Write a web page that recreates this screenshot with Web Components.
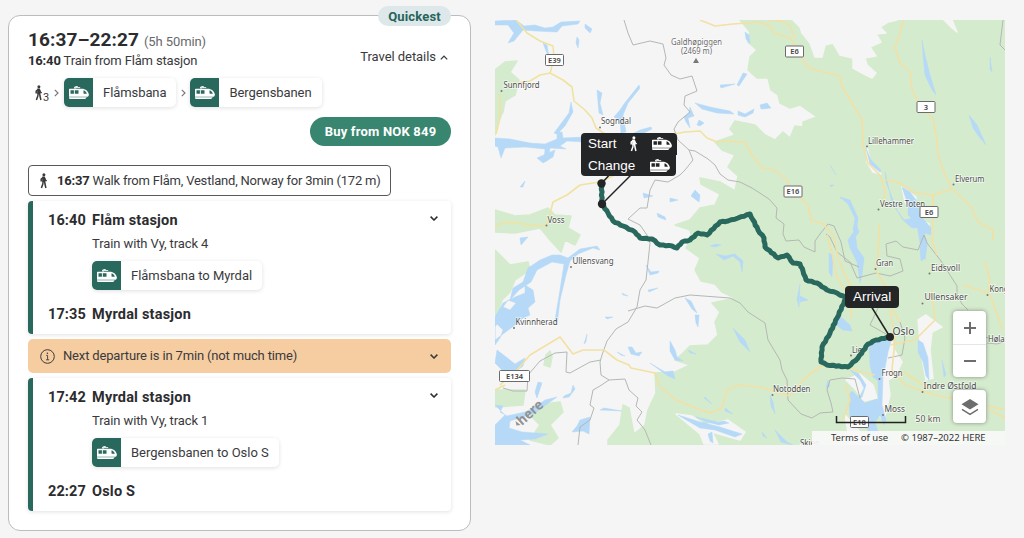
<!DOCTYPE html>
<html lang="en">
<head>
<meta charset="utf-8">
<title>Travel details</title>
<style>
  body {
    margin: 0;
    height: 538px;
    overflow: hidden;
    background: #f5f5f6;
    color: #3a3a3d;
    font: 13px/18px Roboto, "Liberation Sans", sans-serif;
    letter-spacing: -.16px;
  }
</style>
</head>
<body>
<travel-page>
  <trip-card slot="trip" badge="Quickest"></trip-card>
  <route-map slot="map"></route-map>
</travel-page>

<script>
  const ICONS = {
    train: `<svg viewBox="0 0 20 14" width="20" height="14">
      <path d="M6.3 3 5.4 1.2 8.2 .2M8.2 0v1.6M5.6 1.6h5.6" fill="none" stroke="currentColor" stroke-width=".9"/>
      <path fill="currentColor" fill-rule="evenodd" d="M.6 2.7H14c3 .5 5.2 2.7 5.8 5.3.3 1.7-.5 2.7-2 2.7H0V3.3ZM1.5 4.3v3.5h3.4V4.3Zm4.3 0v3.5h3.7V4.3Zm8.7 0v2.6c0 .6.3.9.9.9h2.5c-.7-1.7-1.7-3-3.4-3.5Z"/>
      <path fill="currentColor" d="M0 11.3h17.8l-1.6 1.7H1.2Q0 13 0 12Z"/>
    </svg>`,
    walk: `<svg viewBox="0 0 9 16" width="9" height="16">
      <circle cx="4.9" cy="1.7" r="1.5" fill="currentColor"/>
      <path fill="currentColor" d="M3.4 3.6h2.5l.5 5.2H3.1Z"/>
      <path d="M4.4 4.4 2.2 6.2v2.2M5.3 4.4 6.4 7l1.2 1M4.2 8 3.8 11 2.4 15M5.5 8l.5 3 .9 4" fill="none" stroke="currentColor" stroke-width="1.5"/>
    </svg>`,
    right: `<svg viewBox="0 0 5 8" width="5" height="8"><path d="m.8.8 3.2 3.2L.8 7.2" fill="none" stroke="#77777b" stroke-width="1.2"/></svg>`,
    up: `<svg viewBox="0 0 8 5" width="8" height="5"><path d="M.8 4.4 4 1.1l3.2 3.3" fill="none" stroke="currentColor" stroke-width="1.3"/></svg>`,
    down: `<svg viewBox="0 0 8 5" width="8" height="5"><path d="M.6.6 4 4 7.4.6" fill="none" stroke="currentColor" stroke-width="1.5"/></svg>`,
    info: `<svg viewBox="0 0 15 15" width="15" height="15"><circle cx="7.5" cy="7.5" r="6.8" fill="none" stroke="currentColor"/><path d="M6.2 6.4h1.4v4.3M6 10.8h3.2" fill="none" stroke="currentColor" stroke-width=".9"/><circle cx="7.4" cy="4.2" r=".8" fill="currentColor"/></svg>`,
    layers: `<svg viewBox="0 0 18 18" width="18" height="18"><path d="m9 1 8.5 5.2L9 11.5.5 6.2Z" fill="#6c6d6f"/><path d="m1 11.3 8 5 8-5" fill="none" stroke="#6c6d6f" stroke-width="1.5"/></svg>`
  };

  class UiIcon extends HTMLElement {
    connectedCallback() {
      this.attachShadow({ mode: 'open' }).innerHTML = `
        <style>
          :host { display: inline-flex; flex: none; }
          svg { display: block; }
        </style>
        ${ICONS[this.getAttribute('name')]}`;
    }
  }
  customElements.define('ui-icon', UiIcon);

  class TravelPage extends HTMLElement {
    constructor() {
      super();
      this.attachShadow({ mode: 'open' }).innerHTML = `
        <style>
          :host { display: flex; gap: 24px; align-items: flex-start; box-sizing: border-box; padding: 15px 19px 0 8px; }
          ::slotted([slot=map]) { margin-top: 5px; }
        </style>
        <slot name="trip"></slot>
        <slot name="map"></slot>`;
    }
  }
  customElements.define('travel-page', TravelPage);

  // white pill with a green train tile in front of the line name
  class LineChip extends HTMLElement {
    constructor() {
      super();
      this.attachShadow({ mode: 'open' }).innerHTML = `
        <style>
          :host {
            display: inline-flex;
            height: 29px;
            box-sizing: border-box;
            align-items: center;
            border-radius: 5px;
            background: #fff;
            box-shadow: 0 1px 4px rgba(0, 0, 0, .13);
            letter-spacing: -.08px;
            white-space: nowrap;
          }
          .tile {
            display: flex;
            width: 29px;
            height: 29px;
            align-items: center;
            justify-content: center;
            border-radius: 5px 0 0 5px;
            background: #29685d;
            color: #fff;
          }
          .name { padding: 0 10px; }
        </style>
        <span class="tile"><ui-icon name="train"></ui-icon></span>
        <span class="name"><slot></slot></span>`;
    }
  }
  customElements.define('line-chip', LineChip);

  class TripLeg extends HTMLElement {
    connectedCallback() {
      const get = name => this.getAttribute(name);
      this.attachShadow({ mode: 'open' }).innerHTML = `
        <style>
          :host {
            display: block;
            height: 133px;
            box-sizing: border-box;
            padding: 10px 13px 0 15px;
            border-left: 5px solid #29685d;
            border-radius: 4px;
            box-shadow: 0 1px 4px rgba(0, 0, 0, .12);
          }
          .stop { display: flex; height: 19px; line-height: 19px; font-size: 14.5px; font-weight: 700; letter-spacing: .2px; color: #2c2c2f; }
          .time { width: 44px; letter-spacing: .1px; }
          .place { flex: 1; }
          .mode { margin: 5px 0 8px 44px; letter-spacing: -.1px; }
          line-chip { margin: 0 0 15px 44px; vertical-align: top; letter-spacing: -.02px; }
          ui-icon { margin-top: 5px; }
        </style>
        <div class="stop"><span class="time">${get('depart')}</span><span class="place">${get('from')}</span><ui-icon name="down"></ui-icon></div>
        <div class="mode">${get('mode')}</div>
        <line-chip>${get('line')}</line-chip>
        <div class="stop"><span class="time">${get('arrive')}</span><span class="place">${get('to')}</span></div>`;
    }
  }
  customElements.define('trip-leg', TripLeg);

  class TripCard extends HTMLElement {
    connectedCallback() {
      this.attachShadow({ mode: 'open' }).innerHTML = `
        <style>
          :host {
            display: block;
            position: relative;
            flex: none;
            width: 463px;
            height: 516px;
            box-sizing: border-box;
            padding: 14px 19px 0;
            border: 1px solid #b9bdc0;
            border-radius: 12px;
            background: #fff;
          }
          .badge {
            position: absolute;
            top: -10px;
            right: 19px;
            width: 73px;
            height: 20px;
            border-radius: 10px;
            background: #dee8ea;
            color: #27645a;
            font-weight: 700;
            line-height: 21px;
            text-align: center;
            letter-spacing: .15px;
          }
          header { display: flex; justify-content: space-between; }
          h1 { display: flex; gap: 5px; align-items: baseline; margin: 0; font-size: 19px; line-height: 19px; letter-spacing: .1px; color: #2c2c2f; }
          h1 small { font-size: 13px; font-weight: 400; letter-spacing: -.1px; color: #68686c; }
          .first { line-height: 19px; }
          .more { display: flex; gap: 4px; align-items: center; height: 18px; margin: 18px 3px 0 0; letter-spacing: -.05px; }
          .legs { display: flex; align-items: center; height: 29px; margin: 8px 0 0 6px; }
          .legs sub { align-self: flex-end; line-height: 14px; vertical-align: baseline; margin-bottom: 2px; font-size: 11px; }
          .legs .gap { margin: 0 5px; }
          .legs .gap + line-chip + .gap { margin: 0 4px 0 5px; }
          .buy { display: flex; justify-content: flex-end; margin: 10px 0 19px; }
          button {
            width: 141px;
            height: 29px;
            padding: 0;
            border: 0;
            border-radius: 15px;
            background: #38866f;
            color: #fff;
            font: 700 13px Roboto, sans-serif;
            letter-spacing: .2px;
          }
          .walk {
            display: flex;
            width: 363px;
            height: 31px;
            box-sizing: border-box;
            align-items: center;
            gap: 9px;
            padding-left: 10px;
            margin-bottom: 5px;
            border: 1px solid #59595c;
            border-radius: 4px;
            letter-spacing: -.2px;
            white-space: nowrap;
          }
          b { color: #2c2c2f; }
          .notice {
            display: flex;
            height: 34px;
            box-sizing: border-box;
            align-items: center;
            gap: 8px;
            margin: 5px 0;
            padding: 0 13px 0 12px;
            border-radius: 5px;
            background: #f6cda1;
          }
          .notice span { flex: 1; }
        </style>
        <span class="badge">${this.getAttribute('badge')}</span>
        <header>
          <div>
            <h1>16:37–22:27 <small>(5h 50min)</small></h1>
            <div class="first"><b>16:40</b> Train from Flåm stasjon</div>
          </div>
          <span class="more">Travel details <ui-icon name="up"></ui-icon></span>
        </header>
        <div class="legs">
          <ui-icon name="walk"></ui-icon><sub>3</sub>
          <ui-icon class="gap" name="right"></ui-icon>
          <line-chip>Flåmsbana</line-chip>
          <ui-icon class="gap" name="right"></ui-icon>
          <line-chip>Bergensbanen</line-chip>
        </div>
        <div class="buy"><button>Buy from NOK 849</button></div>
        <div class="walk">
          <ui-icon name="walk"></ui-icon>
          <span><b>16:37</b> Walk from Flåm, Vestland, Norway for 3min (172 m)</span>
        </div>
        <trip-leg depart="16:40" from="Flåm stasjon" mode="Train with Vy, track 4" line="Flåmsbana to Myrdal" arrive="17:35" to="Myrdal stasjon"></trip-leg>
        <div class="notice">
          <ui-icon name="info"></ui-icon>
          <span>Next departure is in 7min (not much time)</span>
          <ui-icon name="down"></ui-icon>
        </div>
        <trip-leg depart="17:42" from="Myrdal stasjon" mode="Train with Vy, track 1" line="Bergensbanen to Oslo S" arrive="22:27" to="Oslo S"></trip-leg>`;
    }
  }
  customElements.define('trip-card', TripCard);

  // black label above a stop on the map
  class MapPin extends HTMLElement {
    constructor() {
      super();
      this.attachShadow({ mode: 'open' }).innerHTML = `
        <style>
          :host {
            position: absolute;
            display: flex;
            box-sizing: border-box;
            align-items: center;
            justify-content: space-between;
            height: 22px;
            padding: 0 5px 0 7px;
            border-radius: 4px;
            background: #242526;
            color: #fff;
            font: 13.5px/22px "Liberation Sans", Arial, sans-serif;
          }
        </style>
        <slot></slot>`;
    }
  }
  customElements.define('map-pin', MapPin);

  const FOREST = [
    'M740 20 750 32 748 42 757 50 750 57 748 70 757 78 768 78 771 90 778 95 780 103 790 108 800 105 817 117 803 122 803 127 795 126 790 138 783 132 775 140 765 135 755 125 735 121 730 129 735 135 715 142 722 150 735 155 728 167 738 176 735 191 720 182 700 178 701 184 720 194 715 205 700 208 690 220 675 225 690 230 692 238 686 248 700 258 695 270 701 281 715 284 722 292 735 298 712 303 720 312 715 322 718 335 708 345 690 346 682 354 675 360 690 365 675 372 655 373 656 393 648 410 645 425 634 434 629 408 623 405 620 425 608 440 608 445 1005 445 1005 20Z',
    'M495 70 505 62 517 61 510 72 519 80 515 95 505 101 503 112 498 122 495 135Z',
    'M495 210 515 216 530 215 548 208 555 215 571 216 568 228 580 235 575 245 565 240 561 252 550 240 540 228 515 233 495 232Z',
    'M495 250 503 258 510 265 528 262 530 270 515 280 510 292 502 300 495 320Z',
    'M495 390 525 390 523 405 495 407Z',
    'M535 405 560 402 563 412 550 425 558 438 550 445 530 440 540 425 530 415Z',
    'M546 355l4-4 2 6-2 10-6-2Z'
  ];

  // bare mountain and built-up areas inside the forest
  const BARE = [
    'M793 20 800 27 802 33 810 43 815 57 822 57 825 45 833 43 840 55 853 58 853 68 862 73 872 78 876 73 867 65 865 58 876 56 870 47 881 42 876 34 886 33 880 27 888 22 897 20Z',
    'M944 20h8l5 12-5-4Z',
    'M753 83l13-2-4 9-7 1Z',
    'M676 414 692 416 705 425 728 420 745 432 740 440 712 432 718 444 704 444 700 434Z',
    'M882 340 892 337 893 348 902 362 896 375 888 380 890 395 884 420 878 415 881 380Z',
    'M846 380 860 374 873 385 877 398 864 401 856 390Z',
    'M918 320 926 315 942 327 932 332 930 350 933 378 926 380 921 352Z',
    'M845 415 860 432 872 436 870 445 850 445Z',
    'M867 147l4 17 10 10-8-2-6-10Z',
    'M902 187l14 10-3 20-8-15ZM913 217l16 7-1 8-10-3Z'
  ];

  const WATER = [
    'M495 21 516 20 524 26 535 25 545 28 553 27 561 22 580 21 578 24 562 26 557 32 536 31 523 30 514 41 508 43 514 33 508 25 495 25Z',
    'M585 24l7 5-2 4-5-5ZM577 37l2 3-1 8-2-5ZM543 43l4 2 2 12-3-6Z',
    'M495 138 510 139 530 143 545 144 557 139 557 132 562 132 563 138 585 137 585 142 567 141 560 146 566 149 550 148 548 160 544 162 545 149 525 147 505 148 501 158 498 147 495 146Z',
    'M571 102l2 10-8 14-8 8-3-1 15-20Z',
    'M597 90l5 3-2 10 3 12-4-2-1-11ZM614 117l6-7 4-6 15-19 1 3-12 15-5 12 3 17-5 1-1-12Z',
    'M640 130l11-3 1 2-8 4-12 1Z',
    'M546 154 555 150 553 157 543 163 537 158Z',
    'M695 103 710 107 730 111 734 114 717 113 702 109ZM738 111l7 3 9-5-1 4-8 4-7-2ZM760 105l7-2 4 5-10 1ZM745 32l4 3 1 9-4-5ZM743 73l4 1-8 12-2-1ZM720 85l15-1-14 4Z',
    'M690 107 694 116 688 118 690 128 686 122 684 117 689 113ZM699 120l5 3-4 3-3-1Z',
    'M922 40 925 55 930 75 936 95 932 90 925 75 923 55ZM969 115 977 125 986 145 980 138 973 128ZM990 57l2 15-2-3Z',
    'M866 148 870 164 880 172 881 170 871 160ZM902 187 910 192 916 200 920 215 931 228 931 235 921 232 915 222 908 215 908 205ZM885 172 886 182 897 210 904 220 913 218 919 228 912 228 903 220 892 203Z',
    'M840 197l10 3 8 18-2 17-3-5 2-12-7-14ZM830 185h4l-3 2Z',
    'M495 345 500 338 503 330 497 324 495 327ZM495 317 503 303 515 297 525 293 525 285 533 290 535 302 528 308 530 315 523 318 515 325 495 340ZM508 300l-5 7 7 3 6-7Z',
    'M510 300 513 288 523 282 528 268 540 260 552 255 560 255 568 258 580 249 597 246 600 250 593 248 578 254 570 261 566 275 560 300 557 325 555 320 560 290 564 264 552 262 537 270 531 282 519 290Z',
    'M497 350 515 364 525 358 523 366 515 372 505 373 495 363Z',
    'M495 405 503 406 500 412 507 416 525 412 535 407 545 400 557 397 550 402 535 413 510 421 509 428 522 432 548 434 535 439 520 440 530 445 495 445 495 425 505 415Z',
    'M538 382l4 1-5 15-2-6ZM563 398l6-1 6-8-2-4-2 8-7 3ZM580 420 590 417 589 434 583 431 572 432 577 426ZM600 410l22 1-18-3ZM587 334l-3 10 2-2ZM605 317h8l-6 2ZM628 347l4 0 4 6 6-1-3 4-8-2ZM617 352l8 4-4-1Z',
    'M670 341 675 350 677 357 683 361 675 360 670 351ZM688 350l8 4-6-1ZM650 363 665 372 673 371 675 379 668 376ZM685 298l6 3 6 12-5-4ZM695 315l4 0-1 12-2-4Z',
    'M695 190l5 5-1 7-8-6ZM643 193l10 3-9 2ZM657 213l8 4 1 3-8-3ZM670 198l8 2-8 2ZM646 265l5 7 8-1-1 2-8 2ZM622 293l6 3-5-1ZM648 290l10-2-9 4ZM520 187l5-6-2 6ZM520 238l8-1-7 8Z',
    'M710 246l6-2 5 1-6 2ZM716 254 725 256 735 254 743 261 742 272 740 262 733 256 724 260ZM733 328 745 340 750 352 740 342ZM829 253l4 2-1 22-3-5ZM840 198l8 2ZM800 284l-3 15 2 8Z',
    'M855 230 857 248 864 258 862 275 860 283 857 262 850 248 848 240ZM836 317l6 1 8 7 2 6-9-1-8-6ZM853 240l4-14 2 6Z',
    'M869 344 876 342 892 338 888 352 885 368 880 382 873 377 870 365ZM878 380 883 376 882 405 886 420 884 425 878 410ZM850 370 859 374 866 385 862 397 858 400 864 388 860 380ZM852 391 865 403 877 399 881 414 875 422 879 435 882 445 872 436 866 427 850 418 849 395Z',
    'M918 340 923 343 928 358 929 380 926 376 923 362 918 352ZM923 237 927 245 925 258 921 261 920 248ZM915 215l8 15 4 12-2 18-4-12ZM942 360l4 15-2 2Z',
    'M678 415 700 422 720 427 742 434 735 437 715 430 700 428 688 421ZM703 422l5 2-1 2ZM708 434l4-2 1 11-3-2ZM696 417l22 5 6-1 5 2-10 2-12-3Z',
    'M770 395l3 7 2 12-4-8ZM775 430l12 12 6 3-12-3ZM762 432l5 6-4-2ZM800 296l8 4-8 2ZM725 408l8 6-8-3ZM705 397l7 7-8-6Z',
    'M830 165l6 10ZM828 380l2 6-4 2Z'
  ];

  const BORDERS = [
    'M624 20 628 33 633 45 650 41 663 44 666 58 664 65 671 75 680 79 692 76 697 91 685 96 684 105 690 112 678 122 674 129 678 140 689 150 695 151 708 159 715 165 720 174 728 180 740 182 752 188 769 199 777 208 776 218 784 224 783 234 786 241 799 240 804 247 815 252 815 241 820 234 828 224 834 226 841 242 845 261 859 267',
    'M689 150 693 160 685 170 680 175 668 182 655 180 650 190 647 208 640 208 628 219 640 225 647 235 650 243 648 262 646 280 640 290 637 307 628 322 616 329 607 341 602 355 600 362 601 375 609 380 625 379 629 390 638 398 636 406 642 412 637 420 645 430 651 445',
    'M601 360 590 362 570 373 566 372 567 352 555 353 540 361 528 375 527 391 513 391 503 388',
    'M609 380 600 386 593 390 590 405 594 408 590 420 580 427 578 445',
    'M628 311 645 306 657 308 675 298 690 295 730 298 740 303 748 312 765 323 768 340 780 360 782 370 787 380 788 400 801 414 812 418 820 413 833 412 831 403 827 390 830 380 842 378 855 379 860 398',
    'M826 234 830 237 837 252 850 262 857 278 876 273 890 276 903 271 900 259 887 256 886 244 896 241 903 247 918 250 924 235 927 243 941 261 950 275 957 286 957 295 962 304 968 310M1003 20 1000 45 1005 50M878 308 870 325 888 335M900 322 905 338 902 355 888 358M970 340 985 337 1003 342 997 344 987 343'
  ];

  const ROADS = [
    ['#f0e3a0', 'M516 20 527 33 540 41 553 46 554 57 551 70 550 73 540 75 530 81 515 83M550 73 563 80 572 87 574 101 585 110 592 118 596 128 605 134'],
    ['#f0e3a0', 'M500 94 500 118 496 134M495 225 510 222 530 225 546 226 551 210 553 202 567 195 580 185 600 182 625 170 674 134 685 132 700 131 707 138 717 142 730 141'],
    ['#f3e0a4', 'M700 20 715 26 733 24 760 22 770 26 774 33 790 38 795 45 803 60 807 67 822 72 840 76 842 87 852 103 862 120 863 145 868 163 880 175 885 190 884 203M767 20 780 21 790 25 795 38M885 180 900 183 913 192 933 195 952 189 945 175 938 155 937 140 933 118 921 108 912 90 910 72 900 63 895 47 900 33 903 20M952 189 970 205 978 222 993 230 993 240M933 195 933 215 932 240 937 255M879 225 878 257 875 267M730 141 745 143 752 155 762 168 775 170 787 180 790 187 800 197 808 205 811 220 823 224 834 236 838 258 845 275 852 288M827 235 832 253 836 275 848 295 852 318M875 269 885 285 890 305 900 322M890 345 915 340 935 320 932 290M890 310 895 340 892 370 905 385 935 395 985 405 1005 410M963 285 988 293 990 280 985 262M990 295 1003 330'],
    ['#f3e0a4', 'M500 385 518 369 530 355 560 337 573 354 583 350 604 350 617 360 629 365 631 368 655 373 660 387 675 399 690 406 710 413 722 408 727 390 738 385 760 387 790 396 805 378 821 366 850 366M843 420 850 400 846 385M848 367 860 372 875 375M990 410 1005 418'],
    ['#f0e3a0', 'M495 390 505 385M904 372 930 390']
  ];

  // [text, x, baseline, width, size]
  const PLACES = [
    ['Galdhøpiggen', 671, 44.5, 51, 8.6, '#6b6b6b'],
    ['(2469 m)', 681, 54, 31, 8.6, '#6b6b6b'],
    ['Sunnfjord', 503.5, 88, 36, 8.6],
    ['Sogndal', 601, 124, 30, 8.6],
    ['Voss', 547.5, 223, 17, 8.6],
    ['Ullensvang', 572.5, 264, 41, 8.6],
    ['Kvinnherad', 515.5, 325, 42, 8.6],
    ['Lillehammer', 868, 143.5, 46, 8.6],
    ['Elverum', 955, 181.5, 29.5, 8.6],
    ['Vestre Toten', 880, 206.5, 45, 8.6],
    ['Gran', 876, 266, 17, 8.6],
    ['Eidsvoll', 931, 271, 29, 8.6],
    ['Kong', 989.5, 292, 19, 8.6],
    ['Ullensaker', 924.5, 300, 43, 8.6],
    ['Oslo', 892.5, 334.5, 22, 10.5],
    ['Høla', 988, 341.5, 16.5, 8.6],
    ['Lier', 852, 352.5, 13, 8.6],
    ['Frogn', 881.5, 376, 21, 8.6],
    ['Notodden', 773, 392, 37.5, 8.6],
    ['Indre Østfold', 923.5, 389, 53, 8.6],
    ['Moss', 884.5, 412, 20.5, 8.6],
    ['Skien', 800, 446, 20, 8.6]
  ];

  const TOWNS = [[501.5, 91], [600, 127.5], [546.5, 225.5], [571, 267], [514, 328], [867, 146.5], [953.5, 184.5], [878.5, 209.5], [875.5, 269], [929.5, 273.5], [987.5, 295], [922.5, 303.5], [851, 355.5], [879.5, 379], [772.5, 395], [922.5, 392], [883, 415]];

  const SHIELDS = [['E39', 554.5, 60, 18], ['E6', 794.5, 51.5, 18], ['3', 926, 107, 18], ['E16', 793, 191.5, 18], ['E6', 929, 212, 18], ['E134', 514.5, 376, 30], ['E18', 859.5, 422, 18]];

  const ROUTE = [[601.5, 183], [602, 204], [608, 213], [613, 221], [623, 226], [635, 232], [640, 238], [652, 239], [660, 245], [672, 246], [677, 248], [682, 242], [690, 240], [698, 233], [707, 235], [720, 222], [728, 221], [738, 218], [750, 214], [753, 220], [758, 230], [764, 238], [765, 247], [778, 258], [787, 255], [793, 263], [800, 264], [803, 271], [806, 280], [817, 283], [827, 290], [837, 293], [846, 298], [837, 318], [830, 333], [822, 347], [821, 362], [827, 365], [848, 367], [858, 358], [868, 344], [876, 340], [890, 337]];

  function trackPath(points) {
    let n = 0;
    const out = [points[0]];
    for (let i = 1; i < points.length; i++) {
      const [ax, ay] = points[i - 1];
      const [bx, by] = points[i];
      const len = Math.hypot(bx - ax, by - ay);
      const steps = Math.max(1, Math.round(len / 3));
      for (let s = 1; s <= steps; s++) {
        const bend = s === steps ? 0 : (n++ % 2 ? 0.35 : -0.35);
        const t = s / steps;
        out.push([
          (ax + (bx - ax) * t - (by - ay) / len * bend).toFixed(1),
          (ay + (by - ay) * t + (bx - ax) / len * bend).toFixed(1)
        ]);
      }
    }
    return 'M' + out.join(' ');
  }

  class RouteMap extends HTMLElement {
    connectedCallback() {
      const paths = (list, attrs) => list.map(d => `<path d="${d}" ${attrs}/>`).join('');
      this.attachShadow({ mode: 'open' }).innerHTML = `
        <style>
          :host { display: block; position: relative; width: 510px; height: 425px; overflow: hidden; background: #f5f5f5; letter-spacing: 0; }
          svg.land { display: block; font-family: "Noto Sans", "Open Sans", sans-serif; }
          .halo { paint-order: stroke; stroke: rgba(255, 255, 255, .65); stroke-width: 1.6px; }
          .start { left: 86px; top: 113px; width: 96px; border-radius: 4px 4px 0 0; }
          .change { left: 86px; top: 135px; width: 95px; height: 21px; line-height: 20px; padding-right: 6px; border-radius: 0 0 4px 4px; }
          .arrival { left: 350px; top: 266px; width: 54px; padding: 0 8px; }
          .start span { flex: 1; }
          .start ui-icon[name=walk] { margin-right: 14px; }
          .controls { position: absolute; left: 458px; top: 291px; display: flex; flex-direction: column; gap: 13px; }
          .box { display: flex; flex-direction: column; width: 33px; border-radius: 4px; background: #fff; box-shadow: 0 0 4px rgba(0, 0, 0, .4); }
          .box span { display: flex; height: 33px; align-items: center; justify-content: center; }
          .box span + span { border-top: 1px solid #e6e6e6; height: 32px; }
          .legal {
            position: absolute;
            right: 0;
            bottom: 0;
            display: flex;
            width: 193px;
            height: 14px;
            box-sizing: border-box;
            padding-left: 19px;
            gap: 13px;
            background: rgba(249, 249, 249, .9);
            color: #333;
            font: 9.5px/14px "Noto Sans", sans-serif;
            white-space: nowrap;
          }
        </style>
        <svg class="land" width="510" height="425" viewBox="495 20 510 425">
          ${paths(FOREST, 'fill="#d5ebce" stroke="#d5ebce" stroke-width="1.5" stroke-linejoin="round"')}
          ${paths(BARE, 'fill="#f5f5f5" stroke="#f5f5f5" stroke-width="1.5" stroke-linejoin="round"')}
          ${paths(WATER, 'fill="#b5d9f7" stroke="#b5d9f7" stroke-width=".5" stroke-linejoin="round"')}
          ${paths(BORDERS, 'fill="none" stroke="#b4b8b4" stroke-linejoin="round"')}
          ${ROADS.map(([color, d]) => `<path d="${d}" fill="none" stroke="${color}" stroke-width="1.6" stroke-linejoin="round"/>`).join('')}
          <path d="m696 58 3 5h-6Z" fill="#777"/>
          ${TOWNS.map(([x, y]) => `<circle cx="${x}" cy="${y}" r="1" fill="#777"/>`).join('')}
          ${PLACES.map(([text, x, y, w, size, color = '#4c4c4c']) =>
            `<text class="halo" x="${x}" y="${y}" font-size="${size}" fill="${color}" textLength="${w}" lengthAdjust="spacingAndGlyphs">${text}</text>`).join('')}
          ${SHIELDS.map(([text, x, y, w]) => `
            <rect x="${x - w / 2}" y="${y - 5.5}" width="${w}" height="11" rx="1" fill="#fff" stroke="#6b6b6b"/>
            <text x="${x}" y="${y + 2.8}" font-size="7.5" font-weight="600" fill="#444" text-anchor="middle">${text}</text>`).join('')}
          <text transform="translate(522 426) rotate(-42)" font-size="14" font-weight="700" fill="#909294" textLength="30" lengthAdjust="spacingAndGlyphs">here</text>
          <path d="m515.5 421 1 4.5 4-.5Z" fill="#909294"/>
          <path d="${trackPath(ROUTE)}" fill="none" stroke="#29685d" stroke-width="5" stroke-linejoin="round" stroke-linecap="round"/>
          <path d="M602 183 612 172M602 204 632 174M890 337 871 306" stroke="#242526" stroke-width="1.5"/>
          <g fill="#242526"><circle cx="601.5" cy="183.5" r="4.2"/><circle cx="602" cy="204" r="4.2"/><circle cx="890" cy="337" r="4"/></g>
          <path d="M836.5 416v6.5h69V416" fill="none" stroke="#222" stroke-width="1.5"/>
          <text class="halo" x="915.5" y="422" font-size="8.6" fill="#555" textLength="25">50 km</text>
        </svg>
        <map-pin class="start"><span>Start</span><ui-icon name="walk"></ui-icon><ui-icon name="train"></ui-icon></map-pin>
        <map-pin class="change"><span>Change</span><ui-icon name="train"></ui-icon></map-pin>
        <map-pin class="arrival"><span>Arrival</span></map-pin>
        <div class="controls">
          <div class="box">
            <span><svg width="12" height="12"><path d="M6 0v12M0 6h12" stroke="#6c6d6f" stroke-width="2"/></svg></span>
            <span><svg width="12" height="2"><path d="M0 1h12" stroke="#6c6d6f" stroke-width="2"/></svg></span>
          </div>
          <div class="box"><span><ui-icon name="layers"></ui-icon></span></div>
        </div>
        <div class="legal"><span>Terms of use</span><span>© 1987–2022 HERE</span></div>`;
    }
  }
  customElements.define('route-map', RouteMap);
</script>
</body>
</html>
